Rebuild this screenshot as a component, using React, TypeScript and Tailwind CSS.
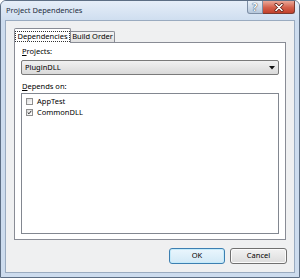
import React from 'react';

function HelpGlyph() {
  return (
    <span className="text-[10px] font-bold leading-none text-white [text-shadow:0_0_1px_#2c3e55,0_0_1px_#2c3e55]">?</span>
  );
}

function CloseGlyph() {
  return (
    <svg width="10" height="9" viewBox="0 0 10 9">
      <path d="M2 1.5 L8 7.5 M8 1.5 L2 7.5" stroke="#5a1c12" strokeWidth="3" strokeLinecap="round" />
      <path d="M2 1.5 L8 7.5 M8 1.5 L2 7.5" stroke="#ffffff" strokeWidth="1.6" strokeLinecap="round" />
    </svg>
  );
}

function CheckBox({ checked }: { checked?: boolean }) {
  return (
    <div className="w-[7px] h-[7px] border border-[#8f8f8f] bg-[linear-gradient(135deg,#dcdcdc,#ffffff)] flex items-center justify-center">
      {checked && (
        <svg width="7" height="7" viewBox="0 0 7 7">
          <path d="M1 3.5 L2.8 5.3 L6 1.2" stroke="#1a1a1a" strokeWidth="1.3" fill="none" />
        </svg>
      )}
    </div>
  );
}

const deps = [
  { name: 'AppTest', checked: false },
  { name: 'CommonDLL', checked: true },
];

export default function App() {
  return (
    <div className="w-[300px] h-[278px] flex flex-col border border-[#5d6e84] rounded-t-[6px] bg-[#cddcee] font-['Noto_Sans',sans-serif] text-[7.5px] text-black overflow-hidden">
      <div className="h-[19px] flex bg-[linear-gradient(to_bottom,#e6eef8,#cfdef0)]">
        <div className="pl-[5px] self-center text-[#1e2d40]">Project Dependencies</div>
        <div className="ml-auto mr-[4px] flex h-[13px]">
          <div className="w-[16px] h-full border border-t-0 border-[#7d8ea5] rounded-bl-[3px] bg-[linear-gradient(to_bottom,#e9f0f8,#b7c8dc)] flex items-center justify-center">
            <HelpGlyph />
          </div>
          <div className="w-[32px] h-full border border-t-0 border-l-0 border-[#7b3a30] rounded-br-[3px] bg-[linear-gradient(to_bottom,#eaa898,#d45f4a_55%,#c2412c)] flex items-center justify-center">
            <CloseGlyph />
          </div>
        </div>
      </div>

      <div className="mx-[4px] mb-[4px] flex-1 border border-[#9aabc0] bg-[#eff0f1] flex flex-col px-[8px] pt-[7px] pb-[8px]">
        <div className="flex items-end h-[14px] relative z-10">
          <div className="w-[57px] h-[15px] mb-[-1px] bg-white border border-b-0 border-[#898c95] rounded-t-[2px] flex items-center justify-center">
            <span className="border border-dotted border-[#333] px-[1px] leading-[9px]">Dependencies</span>
          </div>
          <div className="w-[44px] h-[11px] border border-l-0 border-b-0 border-[#898c95] rounded-tr-[2px] bg-[linear-gradient(to_bottom,#f4f4f4,#e0e0e0)] flex items-center justify-center leading-none">
            Build Order
          </div>
        </div>

        <div className="flex-1 bg-white border border-[#898c95] flex flex-col px-[6px] pt-[3px] pb-[5px]">
          <div className="leading-[11px] pl-[1px]">
            <span className="underline underline-offset-1">P</span>rojects:
          </div>
          <div className="mt-[3px] h-[15px] border border-[#7a7a7a] rounded-[2px] bg-[linear-gradient(to_bottom,#f1f1f1,#dadada)] flex items-center px-[3px]">
            <span>PluginDLL</span>
            <svg className="ml-auto" width="6" height="4" viewBox="0 0 6 4">
              <path d="M0 0 H6 L3 3.5 Z" fill="#111" />
            </svg>
          </div>
          <div className="mt-[6px] leading-[11px] pl-[1px]">
            <span className="underline underline-offset-1">D</span>epends on:
          </div>
          <div className="mt-[1px] flex-1 border border-[#828790] pt-[2px] pl-[4px] flex flex-col">
            {deps.map((d) => (
              <div key={d.name} className="h-[11px] flex items-center gap-[4px]">
                <CheckBox checked={d.checked} />
                <span>{d.name}</span>
              </div>
            ))}
          </div>
        </div>

        <div className="flex justify-end gap-[5px] mt-[8px] mr-[-1px]">
          <div className="w-[56px] h-[16px] rounded-[3px] border border-[#3c7fb1] bg-[linear-gradient(to_bottom,#eaf6fd,#d2e9f6)] shadow-[inset_0_0_0_1px_#c4ebfb] flex items-center justify-center">
            OK
          </div>
          <div className="w-[57px] h-[16px] rounded-[3px] border border-[#707070] bg-[linear-gradient(to_bottom,#f2f2f2,#dcdcdc)] shadow-[inset_0_0_0_1px_#fbfbfb] flex items-center justify-center">
            Cancel
          </div>
        </div>
      </div>
    </div>
  );
}
